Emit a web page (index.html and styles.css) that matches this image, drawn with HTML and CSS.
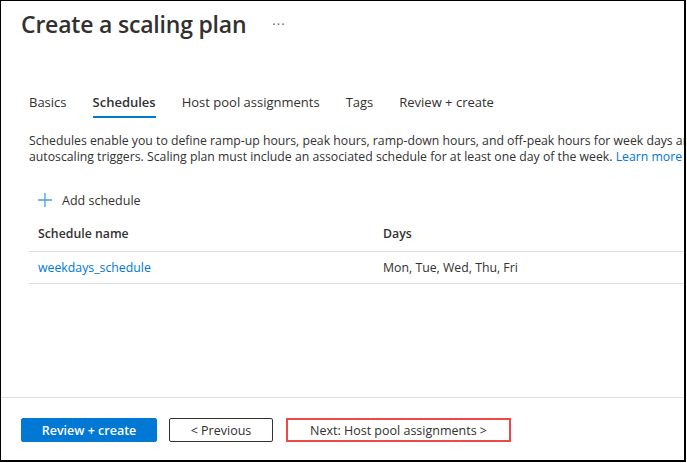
FILE: index.html
```html
<!DOCTYPE html>
<html>
<head>
<meta charset="utf-8">
<link rel="stylesheet" href="styles.css">
</head>
<body>
<div class="frame">
  <main class="content">
    <header class="title-row">
      <h1 class="title">Create a scaling plan</h1>
      <span class="more">···</span>
    </header>
    <nav class="tabs">
      <span class="tab">Basics</span>
      <span class="tab active">Schedules</span>
      <span class="tab">Host pool assignments</span>
      <span class="tab">Tags</span>
      <span class="tab">Review + create</span>
    </nav>
    <p class="desc">Schedules enable you to define ramp-up hours, peak hours, ramp-down hours, and off-peak hours for week days and<br>autoscaling triggers. Scaling plan must include an associated schedule for at least one day of the week. <a class="link">Learn more</a></p>
    <div class="toolbar">
      <span class="add">
        <svg class="plus" width="14" height="14" viewBox="0 0 14 14"><path d="M7 0v14M0 7h14" stroke="#4a9ee0" stroke-width="1.3" fill="none"/></svg>
        <span>Add schedule</span>
      </span>
    </div>
    <div class="table">
      <div class="row head">
        <span class="c1">Schedule name</span>
        <span class="c2">Days</span>
      </div>
      <div class="row">
        <span class="c1 link">weekdays_schedule</span>
        <span class="c2">Mon, Tue, Wed, Thu, Fri</span>
      </div>
    </div>
  </main>
  <footer class="footer">
    <button class="btn primary">Review + create</button>
    <button class="btn secondary">&lt; Previous</button>
    <button class="btn next">Next: Host pool assignments &gt;</button>
  </footer>
</div>
</body>
</html>
```

FILE: styles.css
```css
* { box-sizing: border-box; }
html, body { margin: 0; padding: 0; background: #fff; }
body { font-family: "Open Sans", "Noto Sans", sans-serif; color: #323130; }
.frame {
  width: 686px;
  height: 462px;
  border-left: 1px solid #000;
  border-top: 1px solid #000;
  border-right: 2px solid #000;
  border-bottom: 2px solid #000;
  overflow: hidden;
  display: flex;
  flex-direction: column;
}
.content { flex: 1; }
.title-row { display: flex; align-items: center; padding: 6px 0 0 20px; height: 40px; }
.title { margin: 0; font-size: 23px; font-weight: 600; color: #323130; line-height: 32px; letter-spacing: -0.2px; }
.more { margin-left: 26px; font-size: 13px; color: #605e5c; letter-spacing: 1px; }
.tabs { display: flex; padding-left: 28px; margin-top: 51px; }
.tab { font-size: 13px; line-height: 20px; padding-bottom: 4px; margin-right: 26px; border-bottom: 2px solid transparent; }
.tab.active { font-weight: 600; border-bottom-color: #0078d4; }
.desc { margin: 15px 0 0 28px; font-size: 12.25px; line-height: 16px; white-space: nowrap; }
.link { color: #0078d4; }
.toolbar { padding-left: 37px; margin-top: 19px; height: 32px; display: flex; align-items: center; }
.add { display: flex; align-items: center; gap: 10px; font-size: 12.5px; }
.table { margin-left: 28px; }
.row { display: flex; align-items: center; height: 32px; border-bottom: 1px solid #e1dfdd; font-size: 12.3px; }
.row.head { font-weight: 600; height: 36px; }
.c1 { width: 354px; padding-left: 9px; }
.c2 { flex: 1; }
.footer { height: 63px; border-top: 1px solid #e1dfdd; display: flex; align-items: flex-start; padding: 20px 0 0 20px; gap: 12px; }
.btn { font-family: inherit; height: 24px; font-size: 12.5px; border-radius: 2px; padding: 0; cursor: pointer; }
.primary { width: 136px; background: #0078d4; color: #fff; border: 1px solid #0078d4; font-weight: 600; }
.secondary { width: 104px; background: #fff; color: #323130; border: 1px solid #323130; }
.next { width: 225px; background: #fff; color: #323130; border: 2px solid #f04848; border-radius: 0; margin-left: 1px; }
```
